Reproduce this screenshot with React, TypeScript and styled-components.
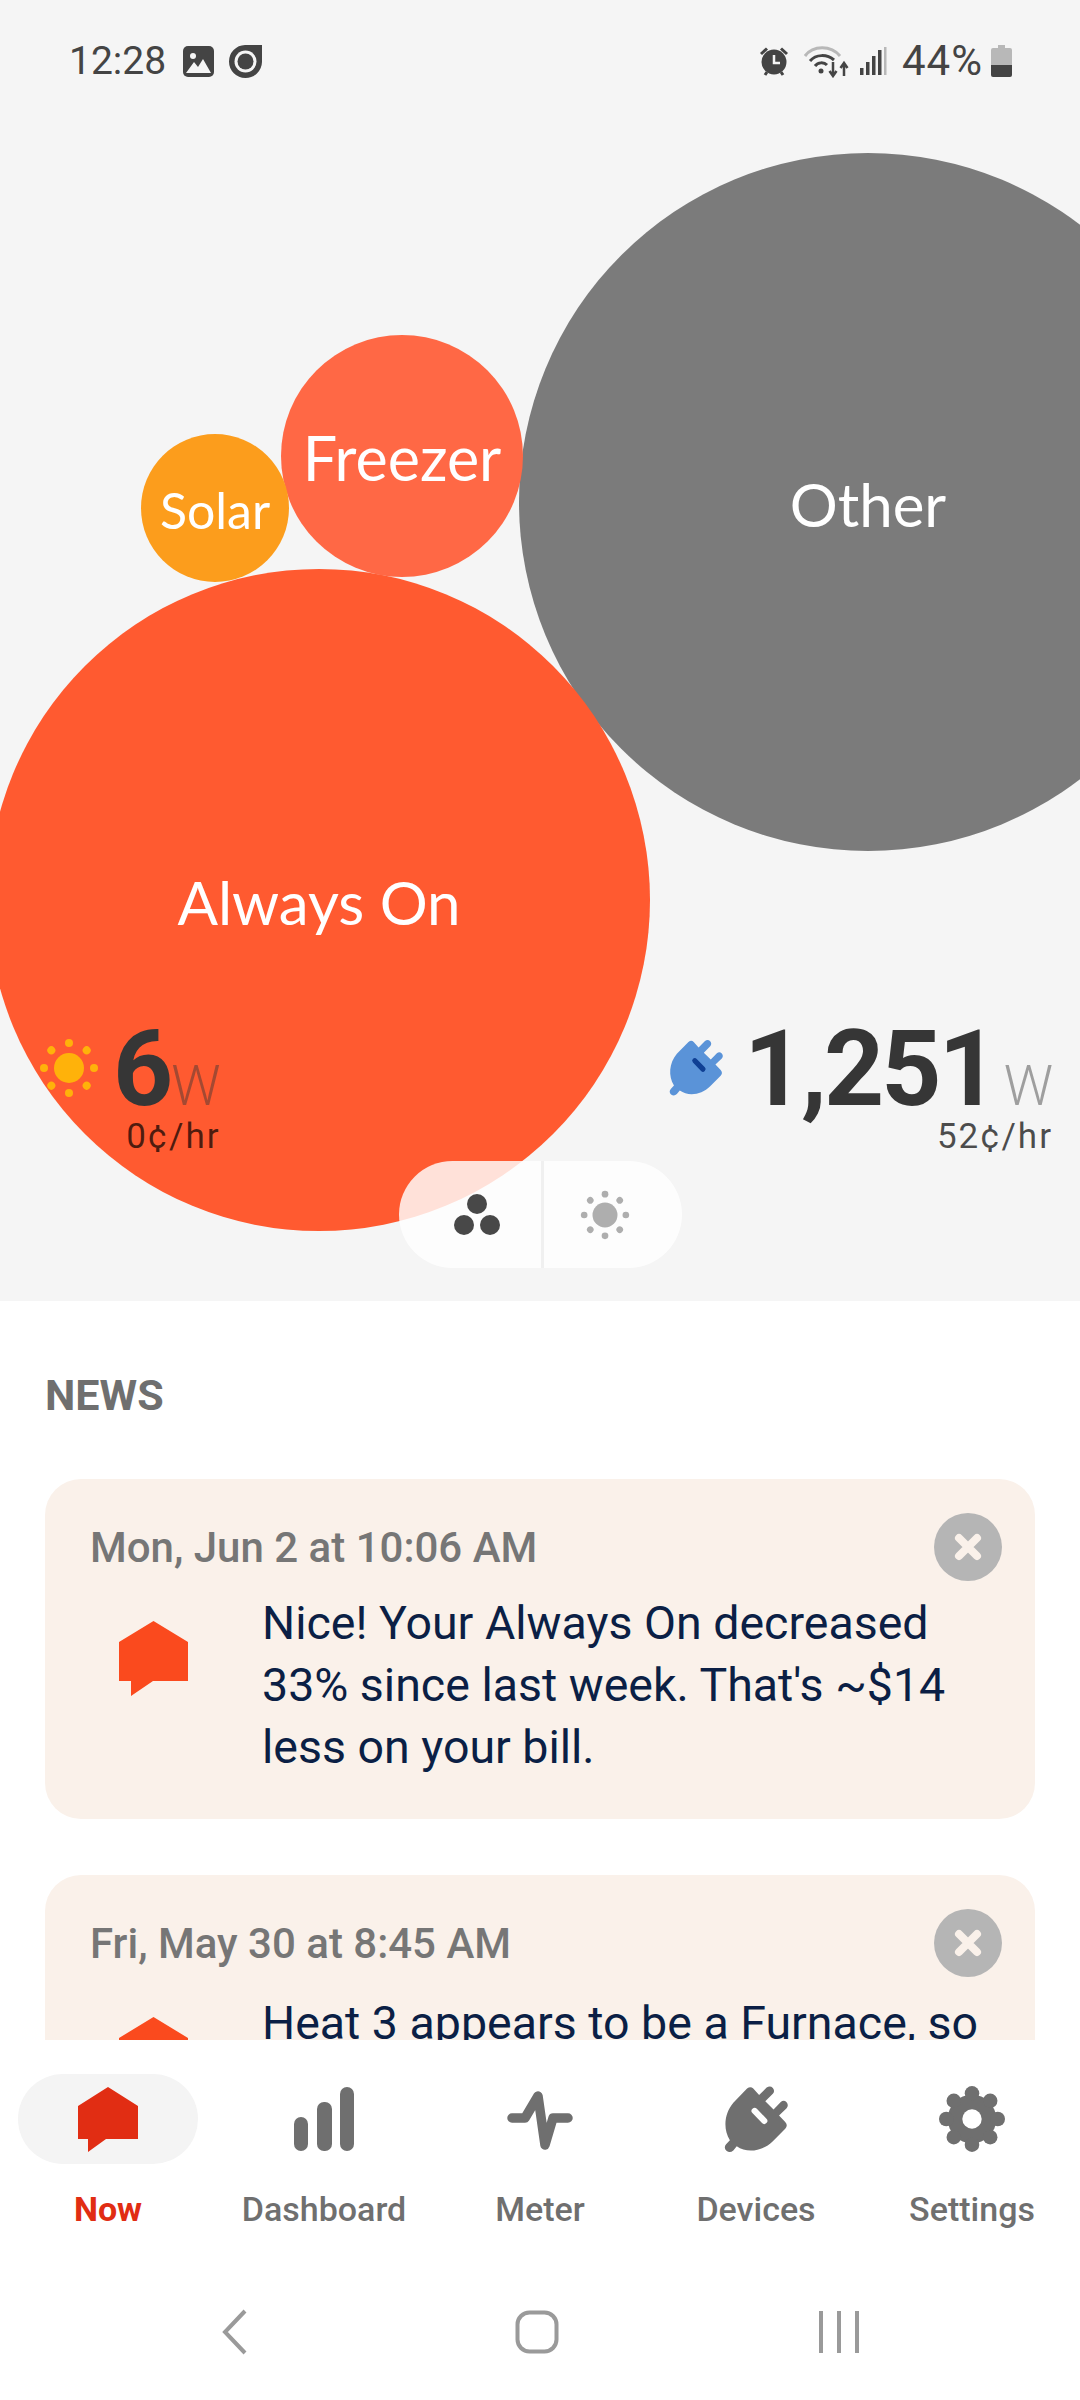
import * as React from 'react';
import styled, { createGlobalStyle } from 'styled-components';

const GlobalStyle = createGlobalStyle`
  html, body {
    margin: 0;
    padding: 0;
    background: #fff;
    font-family: Roboto, "Liberation Sans", sans-serif;
  }
`;

const Screen = styled.div`
  width: 1080px;
  height: 2400px;
  display: flex;
  flex-direction: column;
  overflow: hidden;
  background: #fff;
`;

const Hero = styled.section`
  position: relative;
  height: 1301px;
  flex: none;
  overflow: hidden;
  background: #f5f5f5;
`;

const StatusBar = styled.div`
  position: relative;
  display: flex;
  align-items: center;
  justify-content: space-between;
  height: 46px;
  padding: 38px 68px 0 69px;
  color: #444;
  font-size: 39px;
  line-height: 46px;
`;

const StatusGroup = styled.div`
  display: flex;
  align-items: center;
`;

const BatteryText = styled.span`
  margin-left: 15px;
  font-size: 42px;
  letter-spacing: 1px;
`;

const StatusIcon = styled.svg<{ $left?: number }>`
  display: block;
  flex: none;
  margin-left: ${(props) => props.$left ?? 0}px;
`;

const Bubble = styled.div<{ $x: number; $y: number; $r: number; $color: string; $size: number }>`
  position: absolute;
  left: ${(props) => props.$x - props.$r}px;
  top: ${(props) => props.$y - props.$r}px;
  width: ${(props) => props.$r * 2}px;
  height: ${(props) => props.$r * 2}px;
  box-sizing: border-box;
  padding-top: 3px;
  display: flex;
  align-items: center;
  justify-content: center;
  border-radius: 50%;
  background: ${(props) => props.$color};
  color: #fff;
  font-family: Lato, sans-serif;
  font-size: ${(props) => props.$size}px;
`;

const Readouts = styled.div`
  position: relative;
  display: flex;
  justify-content: space-between;
  align-items: flex-start;
  margin-top: 940px;
  padding: 0 27px 0 39px;
`;

const Readout = styled.div`
  display: flex;
  flex-direction: column;
  align-items: flex-end;
`;

const ReadoutMain = styled.div`
  display: flex;
  align-items: baseline;
`;

const PowerValue = styled.span<{ $left: number }>`
  display: inline-block;
  margin-left: ${(props) => props.$left}px;
  color: #363636;
  font-size: 105px;
  font-weight: 700;
  letter-spacing: -3px;
  line-height: 92px;
`;

const PowerUnit = styled.span<{ $gap: number }>`
  display: inline-block;
  margin-left: ${(props) => props.$gap}px;
  color: rgba(54, 54, 54, 0.45);
  font-size: 55px;
  font-weight: 300;
  line-height: 60px;
`;

const IconSvg = styled.svg`
  flex: none;
  align-self: center;
`;

const ReadoutIcon = styled(IconSvg)`
  margin-bottom: 4px;
`;

const Rate = styled.div`
  margin-top: 1px;
  color: rgba(0, 0, 0, 0.7);
  font-size: 35px;
  letter-spacing: 2px;
  line-height: 40px;
`;

const ViewToggle = styled.div`
  position: absolute;
  left: 399px;
  top: 1161px;
  width: 283px;
  height: 107px;
  display: grid;
  grid-template-columns: 1fr 1fr;
  border-radius: 54px;
  overflow: hidden;
`;

const ToggleSide = styled.div<{ $divider?: boolean }>`
  display: flex;
  align-items: center;
  justify-content: center;
  padding: ${(props) => (props.$divider ? '0 16px 0 0' : '0 0 0 14px')};
  background: rgba(255, 255, 255, 0.82);
  border-left: ${(props) => (props.$divider ? '3px solid #f0f0f0' : 'none')};
`;

const Feed = styled.main`
  height: 739px;
  flex: none;
  overflow: hidden;
  padding: 0 45px;
  box-sizing: border-box;
`;

const SectionTitle = styled.h2`
  margin: 71px 0 60px 0;
  color: #6f6f6f;
  font-size: 43px;
  font-weight: 700;
  line-height: 47px;
`;

const Card = styled.article`
  position: relative;
  margin-bottom: 56px;
  padding: 46px 45px 41px 45px;
  border-radius: 36px;
  background: #faf1ea;
`;

const CardDate = styled.div`
  color: #767676;
  font-size: 42px;
  font-weight: 500;
  line-height: 46px;
`;

const CloseButton = styled.div`
  position: absolute;
  top: 34px;
  right: 33px;
  width: 68px;
  height: 68px;
  display: flex;
  align-items: center;
  justify-content: center;
  border-radius: 50%;
  background: #b5b5b5;
`;

const CardBody = styled.div<{ $top: number }>`
  display: flex;
  align-items: flex-start;
  gap: 74px;
  margin-top: ${(props) => props.$top}px;
  padding-left: 29px;
`;

const CardIcon = styled.svg<{ $top: number }>`
  flex: none;
  margin-top: ${(props) => props.$top}px;
`;

const CardText = styled.p`
  margin: 0;
  color: #0b1f45;
  font-size: 46.5px;
  line-height: 62px;
`;

const TabBar = styled.nav`
  display: grid;
  grid-template-columns: repeat(5, 216px);
  height: 220px;
  flex: none;
  background: #fff;
`;

const Tab = styled.div`
  display: flex;
  flex-direction: column;
  align-items: center;
  padding-top: 34px;
`;

const TabIconWrap = styled.div<{ $active?: boolean }>`
  width: 180px;
  height: 90px;
  display: flex;
  align-items: center;
  justify-content: center;
  border-radius: 45px;
  background: ${(props) => (props.$active ? '#f4f4f4' : 'transparent')};
`;

const TabLabel = styled.span<{ $active?: boolean }>`
  margin-top: 25px;
  color: ${(props) => (props.$active ? '#e12d13' : '#6f6f6f')};
  font-size: 34px;
  font-weight: ${(props) => (props.$active ? 700 : 500)};
  line-height: 40px;
`;

const SystemNav = styled.div`
  display: grid;
  grid-template-columns: repeat(3, 302.5px);
  justify-content: center;
  justify-items: center;
  align-items: center;
  height: 140px;
  flex: none;
  padding: 4px 7px 0 0;
  box-sizing: border-box;
`;

const SunDrawing = ({ color }: { color: string }) => (
  <>
    <circle cx="30" cy="30" r="15" fill={color} />
    {[0, 45, 90, 135, 180, 225, 270, 315].map((a) => (
      <circle key={a} cx="30" cy="5" r="4" fill={color} transform={`rotate(${a} 30 30)`} />
    ))}
  </>
);

const PLUG =
  'M775 57 Q785 49 793 57 L810 76 L832 54 Q842 47 850 55 Q857 64 850 72 L828 94 L852 118 L873 96 Q882 89 890 97 Q897 106 890 114 L868 135 L886 154 Q895 164 886 174 L850 210 C820 240 775 246 745 225 L735 237 Q725 246 715 238 Q706 229 714 219 L725 207 C705 175 708 130 735 98 Z';

const PlugDrawing = ({ color, slot }: { color: string; slot: string }) => (
  <>
    <path d={PLUG} fill={color} />
    <path d="M797 122 L825 151" fill="none" stroke={slot} strokeWidth="18" strokeLinecap="round" />
  </>
);

const SpeechHome = ({ top }: { top: number }) => (
  <CardIcon $top={top} width={69} height={75} viewBox="0 0 69 75">
    <path d="M34.5 0 L69 21 V60 H34 L12 75 V60 H0 V21 Z" fill="#fa4a1e" />
  </CardIcon>
);

const NavHome = () => (
  <svg width="60" height="65" viewBox="0 0 60 65">
    <path d="M30 0 L60 19 V52 H28 L10 65 V52 H0 V19 Z" fill="#e12d13" />
  </svg>
);

const NavBars = () => (
  <svg width="60" height="64" viewBox="0 0 60 64">
    <rect x="0" y="30" width="14" height="34" rx="7" fill="#6f6f6f" />
    <rect x="23" y="15" width="15" height="49" rx="7" fill="#6f6f6f" />
    <rect x="46" y="0" width="14" height="64" rx="7" fill="#6f6f6f" />
  </svg>
);

const NavMeter = () => (
  <svg width="66" height="62" viewBox="0 0 66 62">
    <path
      d="M5 30 H18 L31 8 L38 57 L46 30 H61"
      fill="none"
      stroke="#6f6f6f"
      strokeWidth="9.5"
      strokeLinecap="round"
      strokeLinejoin="round"
    />
  </svg>
);

const NavGear = () => (
  <svg width="66" height="66" viewBox="0 0 68 68">
    <g fill="#6f6f6f">
      <circle cx="34" cy="34" r="25" />
      {[0, 45, 90, 135, 180, 225, 270, 315].map((a) => (
        <circle key={a} cx="34" cy="7.5" r="7.5" transform={`rotate(${a} 34 34)`} />
      ))}
    </g>
    <circle cx="34" cy="34" r="10" fill="#fff" />
  </svg>
);

const CloseGlyph = () => (
  <svg width="28" height="28" viewBox="0 0 28 28">
    <path d="M5 5 L23 23 M23 5 L5 23" stroke="#faf1ea" strokeWidth="8" strokeLinecap="round" />
  </svg>
);

const tabs = [
  { label: 'Now', icon: <NavHome />, active: true },
  { label: 'Dashboard', icon: <NavBars /> },
  { label: 'Meter', icon: <NavMeter /> },
  {
    label: 'Devices',
    icon: (
      <IconSvg width={66} height={69} viewBox="705 47 192 200">
        <PlugDrawing color="#6f6f6f" slot="#fff" />
      </IconSvg>
    ),
  },
  { label: 'Settings', icon: <NavGear /> },
];

export default function App() {
  return (
    <Screen>
      <GlobalStyle />
      <Hero>
        <Bubble $x={868} $y={502} $r={349} $color="#7b7b7b" $size={60}>Other</Bubble>
        <Bubble $x={319} $y={900} $r={331} $color="#ff5a30" $size={60}>Always On</Bubble>
        <Bubble $x={402} $y={456} $r={121} $color="#ff6845" $size={61}>Freezer</Bubble>
        <Bubble $x={215} $y={508} $r={74} $color="#fc9d1c" $size={50}>Solar</Bubble>

        <StatusBar>
          <StatusGroup>
            <span>12:28</span>
            <StatusIcon $left={17} width="31" height="31" viewBox="0 0 31 31">
              <rect width="31" height="31" rx="5" fill="#444" />
              <circle cx="10" cy="10" r="3" fill="#f5f5f5" />
              <path d="M3 27 L11 16 L15 21 L20 13 L28 27 Z" fill="#f5f5f5" />
            </StatusIcon>
            <StatusIcon $left={15} width="33" height="33" viewBox="0 0 33 33">
              <path d="M16 0 H33 V17 A16.5 16.5 0 1 1 16 0 Z" fill="#444" />
              <circle cx="16.5" cy="16.5" r="11" fill="#f5f5f5" />
              <circle cx="16.5" cy="16.5" r="8" fill="#444" />
            </StatusIcon>
          </StatusGroup>
          <StatusGroup>
            <StatusIcon width="30" height="30" viewBox="0 0 30 30">
              <circle cx="15" cy="16" r="12.5" fill="#444" />
              <path d="M15 9 V17 H21" fill="none" stroke="#f5f5f5" strokeWidth="2.5" />
              <path d="M2 8 L8 2.5 M28 8 L22 2.5 M6 29 L8 26 M24 29 L22 26" stroke="#444" strokeWidth="3" />
            </StatusIcon>
            <StatusIcon $left={15} width="45" height="34" viewBox="0 0 45 34">
              <path d="M1 12 C9 1 27 1 36 12" fill="none" stroke="#b8b8b8" strokeWidth="3" />
              <path d="M6 17 C12 10 23 10 30 16" fill="none" stroke="#444" strokeWidth="3" />
              <path d="M11 22 C14 18 20 18 23 21" fill="none" stroke="#444" strokeWidth="3" />
              <circle cx="17" cy="27" r="2.5" fill="#444" />
              <path d="M29 18 V32 M25.5 27 L29 32 L32.5 27 M40 32 V20 M36.5 24 L40 19 L43.5 24" fill="none" stroke="#444" strokeWidth="2.5" />
            </StatusIcon>
            <StatusIcon $left={11} width="27" height="30" viewBox="0 0 27 30">
              <rect x="0" y="22" width="3.5" height="7" fill="#444" />
              <rect x="6" y="16" width="3.5" height="13" fill="#444" />
              <rect x="12" y="10" width="3.5" height="19" fill="#444" />
              <rect x="18" y="4" width="3.5" height="25" fill="#444" />
              <rect x="24" y="1" width="2.5" height="28" fill="#b8b8b8" />
            </StatusIcon>
            <BatteryText>44%</BatteryText>
            <StatusIcon $left={8} width="21" height="32" viewBox="0 0 21 32">
              <path d="M7 0 H14 V3 H19 Q21 3 21 5 V20 H0 V5 Q0 3 2 3 H7 Z" fill="#b8b8b8" />
              <path d="M0 20 H21 V30 Q21 32 19 32 H2 Q0 32 0 30 Z" fill="#444" />
            </StatusIcon>
          </StatusGroup>
        </StatusBar>

        <Readouts>
          <Readout>
            <ReadoutMain>
              <ReadoutIcon width={60} height={60} viewBox="0 0 60 60">
                <SunDrawing color="#ffb20a" />
              </ReadoutIcon>
              <PowerValue $left={14}>6</PowerValue>
              <PowerUnit $gap={1}>W</PowerUnit>
            </ReadoutMain>
            <Rate>0¢/hr</Rate>
          </Readout>
          <Readout>
            <ReadoutMain>
              <ReadoutIcon width={56} height={58} viewBox="705 47 192 200">
                <PlugDrawing color="#5a93d8" slot="#0f3f94" />
              </ReadoutIcon>
              <PowerValue $left={20}>1,251</PowerValue>
              <PowerUnit $gap={8}>W</PowerUnit>
            </ReadoutMain>
            <Rate>52¢/hr</Rate>
          </Readout>
        </Readouts>

        <ViewToggle>
          <ToggleSide>
            <svg width="46" height="42" viewBox="0 0 46 42">
              <circle cx="23" cy="10" r="10" fill="#484848" />
              <circle cx="10" cy="31" r="10" fill="#484848" />
              <circle cx="36" cy="31" r="10" fill="#484848" />
            </svg>
          </ToggleSide>
          <ToggleSide $divider>
            <IconSvg width={50} height={50} viewBox="0 0 60 60">
              <SunDrawing color="#aeaeae" />
            </IconSvg>
          </ToggleSide>
        </ViewToggle>
      </Hero>

      <Feed>
        <SectionTitle>NEWS</SectionTitle>
        <Card>
          <CardDate>Mon, Jun 2 at 10:06 AM</CardDate>
          <CloseButton><CloseGlyph /></CloseButton>
          <CardBody $top={21}>
            <SpeechHome top={29} />
            <CardText>
              Nice! Your Always On decreased
              <br />
              33% since last week. That's ~$14
              <br />
              less on your bill.
            </CardText>
          </CardBody>
        </Card>
        <Card>
          <CardDate>Fri, May 30 at 8:45 AM</CardDate>
          <CloseButton><CloseGlyph /></CloseButton>
          <CardBody $top={25}>
            <SpeechHome top={25} />
            <CardText>Heat 3 appears to be a Furnace, so</CardText>
          </CardBody>
        </Card>
      </Feed>

      <TabBar>
        {tabs.map((tab) => (
          <Tab key={tab.label}>
            <TabIconWrap $active={tab.active}>{tab.icon}</TabIconWrap>
            <TabLabel $active={tab.active}>{tab.label}</TabLabel>
          </Tab>
        ))}
      </TabBar>

      <SystemNav>
        <svg width="25" height="46" viewBox="0 0 25 46">
          <path d="M23 2 L3 23 L23 44" fill="none" stroke="#9a9a9a" strokeWidth="4" />
        </svg>
        <svg width="44" height="44" viewBox="0 0 44 44">
          <rect x="2.5" y="2.5" width="39" height="39" rx="12" fill="none" stroke="#9a9a9a" strokeWidth="4" />
        </svg>
        <svg width="40" height="42" viewBox="0 0 40 42">
          <path d="M2 0 V42 M20 0 V42 M38 0 V42" fill="none" stroke="#9a9a9a" strokeWidth="4" />
        </svg>
      </SystemNav>
    </Screen>
  );
}
